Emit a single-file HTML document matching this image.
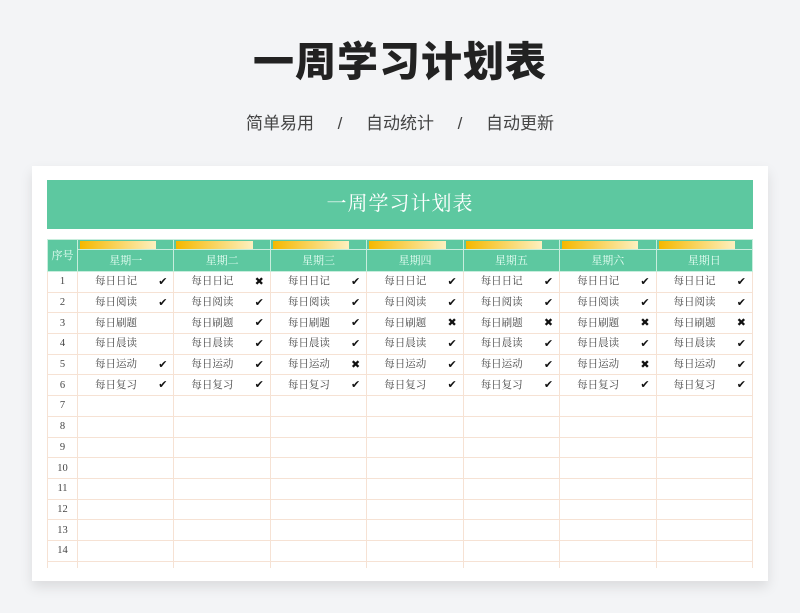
<!DOCTYPE html>
<html><head><meta charset="utf-8"><style>
*{margin:0;padding:0;box-sizing:border-box}
body{width:800px;height:613px;background:#f3f4f6;position:relative;overflow:hidden;font-family:"Liberation Serif","Noto Serif CJK SC",serif}
.t{position:absolute;left:0;width:800px;text-align:center;font-family:"Liberation Sans","Noto Sans CJK SC",sans-serif}
.t1{top:34px;font-size:41px;font-weight:900;color:#222;letter-spacing:1px;line-height:56px}
.t2{top:112px;font-size:17px;color:#444;line-height:24px}
.card{position:absolute;left:32px;top:166px;width:736px;height:415px;background:#fff;box-shadow:0 6px 12px rgba(0,0,0,.1)}
.ban{position:absolute;left:15px;top:14px;width:706px;height:49px;background:#5dc8a0;color:#fff;font-size:20px;text-align:center;line-height:49px;letter-spacing:1px}
.grid{position:absolute;left:15px;top:73px;width:706px;height:329px;overflow:hidden}
table{border-collapse:collapse;table-layout:fixed;width:706px}
td{border:1px solid #f6e2d4;height:20.7px;font-size:10.5px;color:#444;padding:0;line-height:19px}
td.n{text-align:center;width:30px}
.hd td{background:#5dc8a0;border:1px solid #c8eedd;color:#eafff5;text-align:center}
.br td{height:10px;font-size:0;line-height:0;border-bottom:1px solid #c8eedd}
.dr td{height:22px;line-height:20px;font-size:11px}
.bar{height:8px;margin:1px 0 0 2px;width:80%;background:linear-gradient(90deg,#f5b800,#fdf0c0)}
.c{position:relative;padding-left:17px}
.c b{position:absolute;right:6px;top:0;font-weight:normal;font-size:11px;color:#111;font-family:"DejaVu Sans",sans-serif}
</style></head><body>
<div class="t t1">一周学习计划表</div>
<div class="t t2">简单易用&nbsp;&nbsp;&nbsp;&nbsp;&nbsp;/&nbsp;&nbsp;&nbsp;&nbsp;&nbsp;自动统计&nbsp;&nbsp;&nbsp;&nbsp;&nbsp;/&nbsp;&nbsp;&nbsp;&nbsp;&nbsp;自动更新</div>
<div class="card">
<div class="ban">一周学习计划表</div>
<div class="grid"><table>
<colgroup><col style="width:30px"><col><col><col><col><col><col><col></colgroup>
<tr class="hd br"><td rowspan="2" style="font-size:11px;line-height:20px">序号</td>
<td><div class="bar"></div></td><td><div class="bar"></div></td><td><div class="bar"></div></td><td><div class="bar"></div></td><td><div class="bar"></div></td><td><div class="bar"></div></td><td><div class="bar"></div></td></tr>
<tr class="hd dr"><td>星期一</td><td>星期二</td><td>星期三</td><td>星期四</td><td>星期五</td><td>星期六</td><td>星期日</td></tr>
<tr><td class="n">1</td><td class="c">每日日记<b>✔</b></td><td class="c">每日日记<b>✖</b></td><td class="c">每日日记<b>✔</b></td><td class="c">每日日记<b>✔</b></td><td class="c">每日日记<b>✔</b></td><td class="c">每日日记<b>✔</b></td><td class="c">每日日记<b>✔</b></td></tr>
<tr><td class="n">2</td><td class="c">每日阅读<b>✔</b></td><td class="c">每日阅读<b>✔</b></td><td class="c">每日阅读<b>✔</b></td><td class="c">每日阅读<b>✔</b></td><td class="c">每日阅读<b>✔</b></td><td class="c">每日阅读<b>✔</b></td><td class="c">每日阅读<b>✔</b></td></tr>
<tr><td class="n">3</td><td class="c">每日刷题</td><td class="c">每日刷题<b>✔</b></td><td class="c">每日刷题<b>✔</b></td><td class="c">每日刷题<b>✖</b></td><td class="c">每日刷题<b>✖</b></td><td class="c">每日刷题<b>✖</b></td><td class="c">每日刷题<b>✖</b></td></tr>
<tr><td class="n">4</td><td class="c">每日晨读</td><td class="c">每日晨读<b>✔</b></td><td class="c">每日晨读<b>✔</b></td><td class="c">每日晨读<b>✔</b></td><td class="c">每日晨读<b>✔</b></td><td class="c">每日晨读<b>✔</b></td><td class="c">每日晨读<b>✔</b></td></tr>
<tr><td class="n">5</td><td class="c">每日运动<b>✔</b></td><td class="c">每日运动<b>✔</b></td><td class="c">每日运动<b>✖</b></td><td class="c">每日运动<b>✔</b></td><td class="c">每日运动<b>✔</b></td><td class="c">每日运动<b>✖</b></td><td class="c">每日运动<b>✔</b></td></tr>
<tr><td class="n">6</td><td class="c">每日复习<b>✔</b></td><td class="c">每日复习<b>✔</b></td><td class="c">每日复习<b>✔</b></td><td class="c">每日复习<b>✔</b></td><td class="c">每日复习<b>✔</b></td><td class="c">每日复习<b>✔</b></td><td class="c">每日复习<b>✔</b></td></tr>
<tr><td class="n">7</td><td></td><td></td><td></td><td></td><td></td><td></td><td></td></tr>
<tr><td class="n">8</td><td></td><td></td><td></td><td></td><td></td><td></td><td></td></tr>
<tr><td class="n">9</td><td></td><td></td><td></td><td></td><td></td><td></td><td></td></tr>
<tr><td class="n">10</td><td></td><td></td><td></td><td></td><td></td><td></td><td></td></tr>
<tr><td class="n">11</td><td></td><td></td><td></td><td></td><td></td><td></td><td></td></tr>
<tr><td class="n">12</td><td></td><td></td><td></td><td></td><td></td><td></td><td></td></tr>
<tr><td class="n">13</td><td></td><td></td><td></td><td></td><td></td><td></td><td></td></tr>
<tr><td class="n">14</td><td></td><td></td><td></td><td></td><td></td><td></td><td></td></tr>
<tr><td class="n"></td><td></td><td></td><td></td><td></td><td></td><td></td><td></td></tr>
</table></div>
</div>
</body></html>
